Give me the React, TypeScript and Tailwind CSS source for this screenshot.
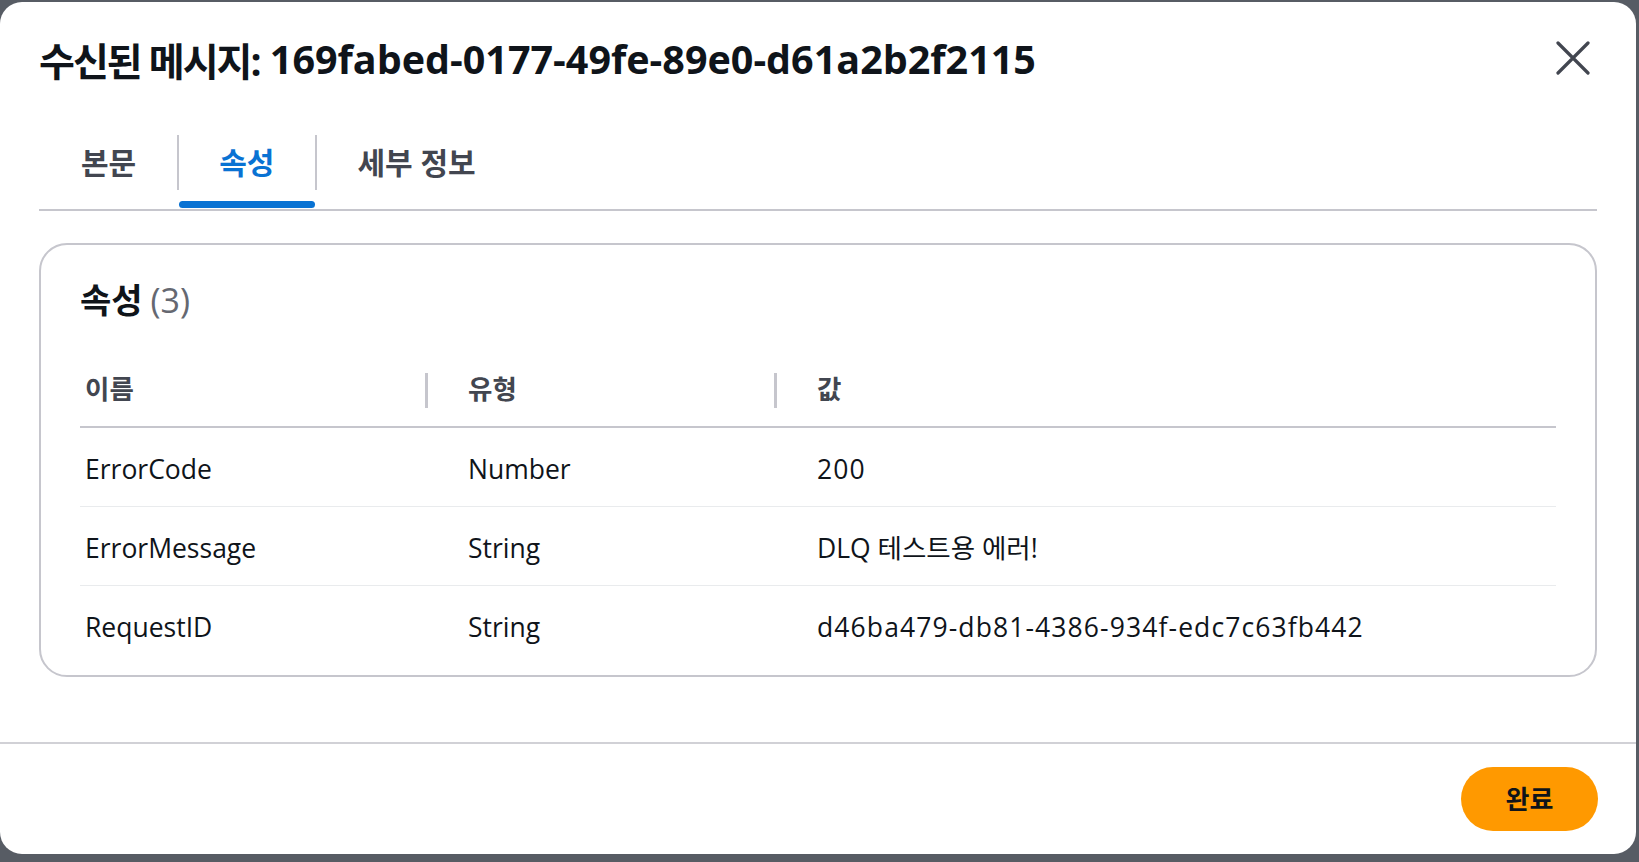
import React from "react";

const rows = [
  { name: "ErrorCode", type: "Number", value: "200", wide: true },
  { name: "ErrorMessage", type: "String", value: "DLQ 테스트용 에러!", wide: false },
  { name: "RequestID", type: "String", value: "d46ba479-db81-4386-934f-edc7c63fb442", wide: true },
];

const font = { fontFamily: '"Open Sans", "Noto Sans CJK KR", sans-serif' };

export default function App() {
  return (
    <div className="w-[1639px] h-[862px] bg-[#575c64] overflow-hidden pt-[2px]" style={font}>
      <div className="w-[1636px] h-[852px] bg-white rounded-[22px] flex flex-col">
        {/* header */}
        <div className="h-[86px] flex items-center justify-between pl-[39px] pr-[46px] pt-[30px]">
          <h1 className="h-[56px] flex items-center font-bold text-[#0f141a] whitespace-nowrap text-[39px] leading-none">
            <span className="tracking-[-2px]">수신된 메시지:</span>
            <span className="text-[39.5px] whitespace-pre"> 169fabed-0177-49fe-89e0-d61a2b2f2115</span>
          </h1>
          <svg width="34" height="34" viewBox="0 0 34 34" className="mt-[-4px]">
            <path d="M2 2 L32 32 M32 2 L2 32" stroke="#424650" strokeWidth="3.2" strokeLinecap="round" />
          </svg>
        </div>

        <div className="px-[39px]">
          {/* tabs */}
          <div className="mt-[32px] flex border-b-2 border-[#c6c6cd]">
            {["본문", "속성", "세부 정보"].map((t, i) => (
              <div key={t} className="relative h-[89px] flex items-center pl-[42px] pr-[41px] pb-[4px]">
                {i > 0 && <div className="absolute left-0 top-[15px] h-[55px] w-[2px] bg-[#c6c6cd]" />}
                <span
                  className={
                    "text-[30px] leading-none font-bold " + (i === 1 ? "text-[#0972d3]" : "text-[#424650]")
                  }
                >
                  {t}
                </span>
                {i === 1 && (
                  <div className="absolute left-[2px] right-0 bottom-[1px] h-[7px] rounded-full bg-[#0972d3]" />
                )}
              </div>
            ))}
          </div>

          {/* card */}
          <div className="mt-[32px] border-2 border-[#c6c6cd] rounded-[28px] px-[39px] pt-[37px] pb-[10px]">
            <div className="h-[36px] flex items-center text-[34px] leading-none font-bold text-[#0f141a]">
              속성 <span className="ml-[8px] font-normal text-[#656871]">(3)</span>
            </div>
            <div className="mt-[38px]">
              <div className="grid grid-cols-[383px_349px_1fr] h-[72px] border-b-2 border-[#c6c6cd] items-center">
                {["이름", "유형", "값"].map((h, i) => (
                  <div key={h} className="flex items-center justify-between pl-[5px] pb-[2px]">
                    <span className="text-[26.5px] font-bold text-[#424650]">{h}</span>
                    {i < 2 && <div className="w-[3px] h-[35px] bg-[#c6c6cd] mr-[35px]" />}
                  </div>
                ))}
              </div>
              {rows.map((r, i) => (
                <div
                  key={r.name}
                  className={
                    "grid grid-cols-[383px_349px_1fr] h-[79px] pt-[5px] items-center text-[26.5px] text-[#0f141a] " +
                    (i < rows.length - 1 ? "border-b border-[#e9ebed]" : "")
                  }
                >
                  <div className="pl-[5px]">{r.name}</div>
                  <div className="pl-[5px]">{r.type}</div>
                  <div className={"pl-[5px] " + (r.wide ? "tracking-[1.1px]" : "")}>{r.value}</div>
                </div>
              ))}
            </div>
          </div>
        </div>

        <div className="flex-1" />

        {/* footer */}
        <div className="h-[112px] border-t-2 border-[#d1d1d6] flex items-center justify-end pr-[38px]">
          <button className="w-[137px] h-[64px] rounded-full bg-[#ff9900] text-[26px] font-bold text-[#0f141a]">
            완료
          </button>
        </div>
      </div>
    </div>
  );
}
